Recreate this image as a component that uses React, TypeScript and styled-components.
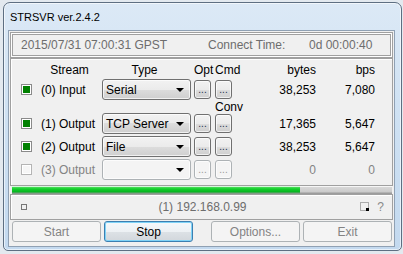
import React from 'react';
import styled, { createGlobalStyle } from 'styled-components';

const GlobalStyle = createGlobalStyle`
  html, body {
    margin: 0;
    padding: 0;
  }
  body {
    width: 403px;
    height: 254px;
    overflow: hidden;
    background: #e3e9ef;
    font-family: "Liberation Sans", Arial, sans-serif;
    font-size: 12px;
    color: #000;
  }
  * {
    box-sizing: border-box;
  }
`;

const Window = styled.div`
  margin: 2px 0 0 3px;
  width: 399px;
  height: 249px;
  border: 1px solid #5e6f82;
  border-radius: 7px 7px 5px 5px;
  background: linear-gradient(to bottom, #dce9f6 0%, #d0e2f3 40%, #c3d9ef 100%);
  box-shadow: inset 0 0 0 1px rgba(255, 255, 255, 0.6);
  padding: 0 6px 3px 4px;
  display: flex;
  flex-direction: column;
`;

const TitleBar = styled.div`
  height: 27px;
  display: flex;
  align-items: center;
  padding-left: 2px;
  font-size: 11px;
  color: #000;
`;

const Client = styled.div`
  flex: 1;
  display: flex;
  flex-direction: column;
  border: 1px solid #8fa0b3;
  background: #f0f0f0;
  padding: 1px 1px 0;
`;

const TimePanel = styled.div`
  height: 26px;
  display: flex;
  align-items: center;
  padding-left: 10px;
  border: 1px solid #a0a0a0;
  box-shadow: inset 0 0 0 1px #fff, inset 0 0 0 2px #a0a0a0;
  color: #6d6d6d;
`;

const TimeText = styled.span<{ $w?: number }>`
  width: ${p => (p.$w ? `${p.$w}px` : 'auto')};
  white-space: nowrap;
`;

const MainPanel = styled.div`
  height: 128px;
  border: 1px solid #a0a0a0;
  box-shadow: inset 1px 1px 0 #fff;
  padding: 0 0 0 10px;
`;

const Grid = styled.div`
  display: grid;
  grid-template-columns: 20px 61px 92px 21px 17px 84px 59px;
  grid-template-rows: 18px 21px 9px 21px 21px 21px;
  row-gap: 2px;
  align-items: center;
`;

const HeadCell = styled.div<{ $pr?: number; $align?: string }>`
  align-self: end;
  line-height: 14px;
  text-align: ${p => p.$align || 'center'};
  padding-right: ${p => p.$pr || 0}px;
  white-space: nowrap;
`;

const ConvLabel = styled.div`
  line-height: 9px;
  text-align: center;
  padding-top: 2px;
  white-space: nowrap;
`;

const Check = styled.div<{ $on: boolean }>`
  width: 11px;
  height: 11px;
  border: 1px solid ${p => (p.$on ? '#8a8a8a' : '#b4b4b4')};
  box-shadow: inset 0 0 0 1px #fff;
  background: ${p => (p.$on ? '#008000' : '#f6f6f6')};
`;

const StreamLabel = styled.div<{ $dis: boolean }>`
  color: ${p => (p.$dis ? '#838383' : '#000')};
  white-space: nowrap;
`;

const Combo = styled.div<{ $dis: boolean }>`
  width: 89px;
  height: 21px;
  display: flex;
  align-items: center;
  justify-content: space-between;
  padding: 0 6px 0 3px;
  border: 1px solid ${p => (p.$dis ? '#adb2b5' : '#707070')};
  border-radius: 3px;
  background: ${p =>
    p.$dis
      ? '#f4f4f4'
      : 'linear-gradient(to bottom, #f2f2f2 0%, #ebebeb 50%, #dddddd 50%, #cfcfcf 100%)'};
  box-shadow: inset 0 0 0 1px rgba(255, 255, 255, 0.7);
  white-space: nowrap;
`;

const DotButton = styled.div<{ $dis: boolean }>`
  width: 17px;
  height: 19px;
  display: flex;
  align-items: flex-end;
  justify-content: center;
  padding-bottom: 5px;
  border: 1px solid ${p => (p.$dis ? '#adb2b5' : '#707070')};
  border-radius: 3px;
  background: ${p =>
    p.$dis
      ? '#f4f4f4'
      : 'linear-gradient(to bottom, #f2f2f2 0%, #ebebeb 50%, #dddddd 50%, #cfcfcf 100%)'};
  box-shadow: inset 0 0 0 1px rgba(255, 255, 255, 0.7);
  color: ${p => (p.$dis ? '#9a9a9a' : '#1c2f4a')};
  font-size: 10px;
  line-height: 6px;
`;

const Num = styled.div<{ $dis: boolean }>`
  text-align: right;
  color: ${p => (p.$dis ? '#838383' : '#000')};
`;

const ProgressTrack = styled.div`
  height: 8px;
  margin: 0 1px 0 2px;
  background: linear-gradient(to bottom, #f6f6f6 0, #f6f6f6 1px, #d8d8d8 1px, #cacaca 6px, #9c9c9c 7px, #9c9c9c 8px);
`;

const ProgressFill = styled.div`
  height: 100%;
  background: linear-gradient(to bottom, #d6f7da 0, #d6f7da 1px, #4fdc5e 1px, #12cf2a 3px, #06b420 6px, #7a9c80 7px, #8a9a8c 8px);
`;

const StatusPanel = styled.div`
  height: 26px;
  display: grid;
  grid-template-columns: 1fr auto 1fr;
  align-items: center;
  padding: 0 8px 0 10px;
  border: 1px solid #a0a0a0;
  box-shadow: inset 1px 1px 0 #fff;
  color: #6d6d6d;
`;

const SmallBox = styled.div`
  width: 6px;
  height: 6px;
  border: 1px solid #777;
`;

const StatusRight = styled.div`
  display: flex;
  align-items: center;
  justify-content: flex-end;
  gap: 7px;
  color: #8a8a8a;
`;

const ButtonRow = styled.div`
  display: flex;
  justify-content: space-between;
  padding: 1px 1px 0 2px;
`;

const ButtonGroup = styled.div`
  display: flex;
  gap: 3px;
`;

const WinButton = styled.div<{ $primary?: boolean }>`
  width: 89px;
  height: 21px;
  display: flex;
  align-items: center;
  justify-content: center;
  border-radius: 3px;
  border: 1px solid ${p => (p.$primary ? '#3c7fb1' : '#adb2b5')};
  background: ${p =>
    p.$primary
      ? 'linear-gradient(to bottom, #f4f8fb 0%, #edf1f4 50%, #dde2e6 50%, #d2d7dc 100%)'
      : '#f4f4f4'};
  box-shadow: ${p => (p.$primary ? 'inset 0 0 0 1px #7fd3f7' : 'none')};
  color: ${p => (p.$primary ? '#000' : '#838383')};
`;

const Arrow = () => (
  <svg width="8" height="4" viewBox="0 0 8 4">
    <polygon points="0,0 8,0 4,4" fill="#000" />
  </svg>
);

const GripIcon = () => (
  <svg width="10" height="10" viewBox="0 0 10 10">
    <rect x="0.5" y="0.5" width="8" height="8" fill="none" stroke="#666" strokeDasharray="1 1" />
    <rect x="6" y="6" width="3" height="3" fill="#000" />
  </svg>
);

const streams = [
  { label: '(0) Input', type: 'Serial', bytes: '38,253', bps: '7,080', on: true },
  { label: '(1) Output', type: 'TCP Server', bytes: '17,365', bps: '5,647', on: true },
  { label: '(2) Output', type: 'File', bytes: '38,253', bps: '5,647', on: true },
  { label: '(3) Output', type: '', bytes: '0', bps: '0', on: false },
];

function StreamRow({ s }: { s: (typeof streams)[number] }) {
  const dis = !s.on;
  return (
    <>
      <Check $on={s.on} />
      <StreamLabel $dis={dis}>{s.label}</StreamLabel>
      <Combo $dis={dis}>
        <span>{s.type}</span>
        <Arrow />
      </Combo>
      <DotButton $dis={dis}>...</DotButton>
      <DotButton $dis={dis}>...</DotButton>
      <Num $dis={dis}>{s.bytes}</Num>
      <Num $dis={dis}>{s.bps}</Num>
    </>
  );
}

export default function App() {
  return (
    <>
      <GlobalStyle />
      <Window>
        <TitleBar>STRSVR ver.2.4.2</TitleBar>
        <Client>
          <TimePanel>
            <TimeText $w={187}>2015/07/31 07:00:31 GPST</TimeText>
            <TimeText $w={101}>Connect Time:</TimeText>
            <TimeText>0d 00:00:40</TimeText>
          </TimePanel>
          <MainPanel>
            <Grid>
              <span />
              <HeadCell $pr={4}>Stream</HeadCell>
              <HeadCell $pr={7}>Type</HeadCell>
              <HeadCell $align="left">Opt</HeadCell>
              <HeadCell>Cmd</HeadCell>
              <HeadCell $align="right">bytes</HeadCell>
              <HeadCell $align="right">bps</HeadCell>

              <StreamRow s={streams[0]} />

              <span />
              <span />
              <span />
              <span />
              <ConvLabel>Conv</ConvLabel>
              <span />
              <span />

              {streams.slice(1).map(s => (
                <StreamRow key={s.label} s={s} />
              ))}
            </Grid>
          </MainPanel>
          <ProgressTrack>
            <ProgressFill style={{ width: '75.8%' }} />
          </ProgressTrack>
          <StatusPanel>
            <SmallBox />
            <span>(1) 192.168.0.99</span>
            <StatusRight>
              <GripIcon />
              <span>?</span>
            </StatusRight>
          </StatusPanel>
          <ButtonRow>
            <ButtonGroup>
              <WinButton>Start</WinButton>
              <WinButton $primary>Stop</WinButton>
            </ButtonGroup>
            <ButtonGroup>
              <WinButton>Options...</WinButton>
              <WinButton>Exit</WinButton>
            </ButtonGroup>
          </ButtonRow>
        </Client>
      </Window>
    </>
  );
}
